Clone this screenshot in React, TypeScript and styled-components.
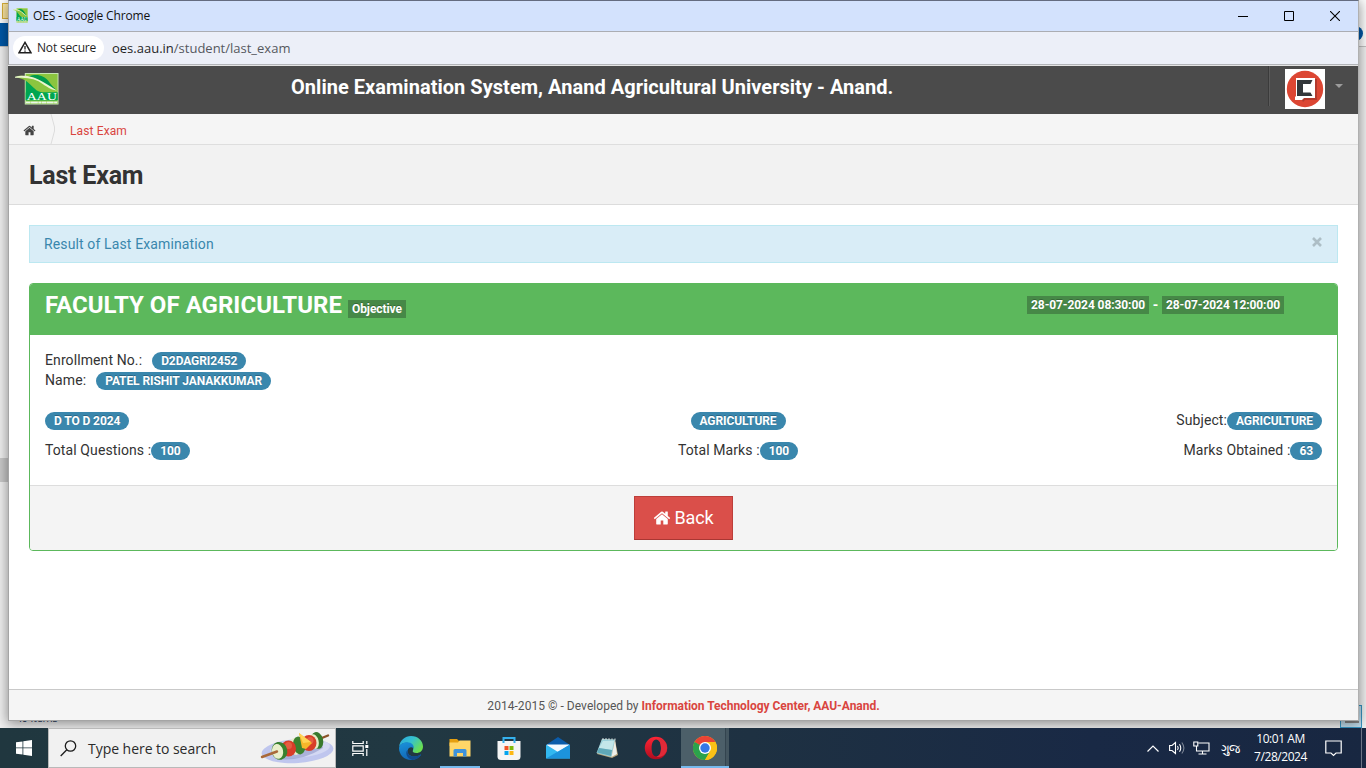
import React from "react";
import styled, { createGlobalStyle, css } from "styled-components";

const GlobalStyle = createGlobalStyle`
  * { box-sizing: border-box; }
  html, body { margin: 0; padding: 0; overflow: hidden; background: #f0f0f0; }
  svg { display: block; flex-shrink: 0; }
`;

const uiFont = css`font-family: "Open Sans", "Noto Sans", sans-serif;`;
const pageFont = css`font-family: Roboto, "Liberation Sans", sans-serif;`;

const Screen = styled.div`
  width: 1366px;
  height: 768px;
  display: flex;
  flex-direction: column;
  overflow: hidden;
`;

/* ---------- Desktop with the window lying over an explorer window ---------- */
const Desktop = styled.div`
  position: relative;
  height: 728px;
  overflow: hidden;
  background: #f2f2f2;
`;
const BackWindow = styled.div`
  position: absolute;
  inset: 0;
  display: flex;
  flex-direction: column;
`;
const BackTitle = styled.div`
  height: 23px;
  background: #fff;
  padding: 3px 2px;
`;
const FolderChip = styled.div`
  width: 12px;
  height: 16px;
  background: #ffe9a2;
  border: 1px solid #d9b13b;
`;
const BackRibbon = styled.div`
  height: 24px;
  display: flex;
  align-items: center;
  justify-content: space-between;
  background: linear-gradient(90deg, #0058a8 0 40px, #fff 40px);
  border-bottom: 1px solid #c4c4c4;
`;
const HelpDot = styled.div`
  width: 15px;
  height: 15px;
  margin: -3px 3px 0 auto;
  border-radius: 50%;
  background: #0058a8;
`;
const BackBody = styled.div`
  flex: 1;
  padding-top: 411px;
`;
const ScrollPiece = styled.div`
  width: 10px;
  height: 24px;
  background: #cbcbcb;
`;
const BackStatus = styled.div`
  height: 23px;
  display: flex;
  justify-content: space-between;
  padding: 0 4px 0 16px;
  ${uiFont}
  font-size: 11px;
  line-height: 26px;
  letter-spacing: -0.3px;
  color: #1e3a5c;
`;
const ViewButton = styled.div`
  width: 22px;
  height: 23px;
  padding: 6px 2px 0 4px;
  background: #c3dfee;
  border: 1px solid #3797c6;
`;
const ViewGlyph = styled.div`
  height: 11px;
  border: 1px solid #878787;
  border-bottom-width: 2px;
`;

const Win = styled.div`
  position: absolute;
  left: 8px;
  top: 0;
  width: 1351px;
  height: 721px;
  display: flex;
  flex-direction: column;
  border: 1px solid #a5a5a5;
  border-top-color: #646c80;
  border-right-color: #b0b0b0;
  background: #fff;
  box-shadow: 0 2px 12px 1px rgba(0, 0, 0, 0.42);
`;
const TitleBar = styled.div`
  height: 31px;
  display: flex;
  align-items: center;
  padding-left: 4px;
  background: #d3e2fd;
  border-bottom: 1px solid #abadb3;
  ${uiFont}
  font-size: 12px;
  letter-spacing: -0.165px;
  color: #111;
`;
const TitleLogo = styled.div`
  margin-top: -2px;
`;
const TitleText = styled.span`
  margin: -2px 0 0 5px;
`;
const WinControls = styled.div`
  margin-left: auto;
  display: flex;
  height: 30px;
`;
const WinControl = styled.div`
  width: 46px;
  display: flex;
  align-items: center;
  justify-content: center;
`;
const AddressBar = styled.div`
  height: 33px;
  display: flex;
  align-items: center;
  padding-left: 4px;
  background: #eceff8;
  border-bottom: 1px solid #b2b4b8;
  ${uiFont}
`;
const SecurityChip = styled.div`
  height: 24px;
  width: 91px;
  display: flex;
  align-items: center;
  gap: 5px;
  padding: 0 0 1px 5px;
  border-radius: 12px;
  background: #fff;
  font-size: 12px;
  font-weight: 500;
  letter-spacing: -0.17px;
  color: #1f1f1f;
`;
const Url = styled.div`
  margin-left: 8px;
  font-size: 13px;
  color: #1f1f1f;
`;
const UrlPath = styled.span`
  color: #55585e;
`;

/* ---------- Web page ---------- */
const Page = styled.div`
  flex: 1;
  display: flex;
  flex-direction: column;
  ${pageFont}
  font-size: 14px;
  line-height: 20px;
  letter-spacing: 0.1px;
  color: #333;
  background: #fff;
`;
const Header = styled.header`
  height: 49px;
  display: flex;
  margin-left: -1px;
  background: #4b4b4b;
  border-top: 1px solid #e4e4e4;
`;
const LogoBox = styled.div`
  width: 283px;
  padding: 7px 0 0 7px;
`;
const HeaderTitle = styled.div`
  padding-top: 11px;
  font-size: 20px;
  font-weight: 700;
  letter-spacing: 0.032px;
  color: #fff;
`;
const UserMenu = styled.div`
  margin-left: auto;
  width: 90px;
  height: 40px;
  display: flex;
  padding: 3px 0 0 16px;
  border-left: 1px solid #3b3b3b;
  box-shadow: inset 1px 0 0 #5b5b5b;
`;
const Avatar = styled.div`
  width: 40px;
  height: 40px;
  background: #fff;
`;
const Caret = styled.div`
  width: 8px;
  height: 4px;
  margin: 15px 0 0 10px;
  border: 4px solid transparent;
  border-top-color: #9c9c9c;
  border-bottom: 0;
`;
const Breadcrumb = styled.nav`
  height: 31px;
  display: flex;
  align-items: center;
  background: #f5f5f5;
  border-bottom: 1px solid #dedede;
  font-size: 12px;
  letter-spacing: 0.12px;
  color: #d9453f;
`;
const CrumbHome = styled.div`
  display: flex;
  width: 41px;
  padding: 2px 0 0 14px;
  color: #444;
`;
const CrumbText = styled.span`
  margin: 3px 0 0 14px;
`;
const PageHeading = styled.h1`
  height: 60px;
  margin: 0;
  padding-left: 20px;
  background: #f2f2f2;
  border-bottom: 1px solid #dcdcdc;
  font-size: 25px;
  line-height: 61px;
  font-weight: 700;
  letter-spacing: -0.22px;
`;
const Content = styled.main`
  flex: 1;
  padding: 20px 20px 0;
`;
const Alert = styled.div`
  height: 38px;
  display: flex;
  justify-content: space-between;
  padding: 8px 15px 8px 14px;
  margin-bottom: 20px;
  background: #d9edf7;
  border: 1px solid #bce8f1;
  letter-spacing: 0.13px;
  color: #3a87ad;
`;
const AlertClose = styled.span`
  padding-top: 3px;
`;
const Panel = styled.section`
  height: 268px;
  display: flex;
  flex-direction: column;
  overflow: hidden;
  border: 1px solid #5cb85c;
  border-radius: 4px;
`;
const PanelHeader = styled.div`
  height: 51px;
  display: flex;
  justify-content: space-between;
  padding: 0 53px 0 15px;
  background: #5cb85c;
  color: #fff;
`;
const PanelTitle = styled.div`
  display: flex;
  gap: 6px;
  font-size: 24px;
  line-height: 42px;
  font-weight: 700;
  letter-spacing: 0.027px;
`;
const Tag = styled.span<{ $top: number }>`
  height: 18px;
  padding: 0 4px;
  margin-top: ${(p) => p.$top}px;
  background: #468847;
  color: #fff;
  font-size: 12px;
  line-height: 18px;
  font-weight: 700;
  letter-spacing: -0.085px;
  text-shadow: 0 -1px 0 rgba(0, 0, 0, 0.25);
`;
const Period = styled.div`
  display: flex;
  font-weight: 700;
  line-height: 42px;
`;
const Dash = styled.span`
  width: 13px;
  text-align: center;
`;
const PanelBody = styled.div`
  height: 150px;
  padding: 15px;
`;
const Line = styled.div`
  display: flex;
  height: 20px;
`;
const Cells = styled.div<{ $gap: number }>`
  display: grid;
  grid-template-columns: 524px 338px 1fr;
  height: 20px;
  margin-top: ${(p) => p.$gap}px;
`;
const Cell = styled.div<{ $align?: string }>`
  display: flex;
  justify-content: ${(p) => p.$align || "flex-start"};
`;
const Badge = styled.span<{ $offset?: number }>`
  height: 18px;
  padding: 0 9px;
  margin: 2px 0 0 ${(p) => p.$offset || 0}px;
  border-radius: 9px;
  background: #3a87ad;
  color: #fff;
  font-size: 12px;
  line-height: 18px;
  font-weight: 700;
  letter-spacing: -0.095px;
  text-shadow: 0 -1px 0 rgba(0, 0, 0, 0.25);
`;
const PanelFooter = styled.div`
  flex: 1;
  display: flex;
  align-items: center;
  justify-content: center;
  background: #f4f4f4;
  border-top: 1px solid #ddd;
`;
const BackButton = styled.button`
  width: 99px;
  height: 44px;
  margin: 0;
  padding: 0 0 1px;
  display: flex;
  align-items: center;
  justify-content: center;
  gap: 3px;
  background: #da4f4a;
  border: 1px solid #bd3e3a;
  border-bottom-color: #a93733;
  color: #fff;
  ${pageFont}
  font-size: 18px;
  letter-spacing: -0.1px;
`;
const Footer = styled.footer`
  height: 31px;
  display: flex;
  justify-content: center;
  padding-top: 6px;
  background: #f5f5f5;
  border-top: 1px solid #c9c9c9;
  font-size: 12px;
  letter-spacing: 0.04px;
  white-space: pre;
  color: #555;
`;
const FooterLink = styled.span`
  font-weight: 700;
  letter-spacing: -0.03px;
  color: #d9453f;
`;

/* ---------- Taskbar ---------- */
const Taskbar = styled.div`
  height: 40px;
  display: flex;
  background: linear-gradient(90deg, #20373f 0, #213842 30%, #1e3142 55%, #192945 80%, #182741 100%);
  ${uiFont}
`;
const StartButton = styled.div`
  width: 48px;
  padding: 12px 0 0 16px;
`;
const SearchBox = styled.div`
  width: 288px;
  display: flex;
  align-items: center;
  padding-left: 11px;
  background: #f1f1f1;
  border: 1px solid #b9b9b9;
  font-size: 14px;
  letter-spacing: -0.04px;
  color: #2b2b2b;
`;
const SearchText = styled.span`
  flex: 1;
  margin-left: 11px;
`;
const TaskSlot = styled.div<{ $active?: boolean; $open?: boolean }>`
  width: 49px;
  display: flex;
  align-items: center;
  justify-content: center;
  ${(p) => p.$open && css`
    background: linear-gradient(#76b9ed, #76b9ed) 50% 100% / 40px 2px no-repeat;
  `}
  ${(p) => p.$active && css`
    width: 48px;
    margin-left: 1px;
    padding-top: 2px;
    background: linear-gradient(90deg, #4c5f69 0 44px, #33444f 44px 45px, #43555f 45px);
    border-bottom: 2px solid #76b9ed;
  `}
`;
const TaskIcons = styled.div`
  display: flex;
`;
const TaskView = styled.div`
  width: 50px;
  display: flex;
  align-items: center;
  padding-left: 16px;
`;
const Tray = styled.div`
  margin-left: auto;
  display: flex;
  align-items: center;
  color: #fff;
`;
const TrayItem = styled.div<{ $width: number }>`
  width: ${(p) => p.$width}px;
  display: flex;
  justify-content: center;
`;
const Language = styled.div`
  width: 33px;
  display: flex;
  justify-content: center;
  font-family: "Noto Sans", sans-serif;
  font-size: 12px;
  letter-spacing: -0.7px;
`;
const Clock = styled.div`
  width: 67px;
  font-size: 12px;
  line-height: 18px;
  letter-spacing: -0.45px;
  text-align: center;
`;
const ShowDesktop = styled.div`
  align-self: stretch;
  width: 5px;
  border-left: 1px solid #6a7485;
`;

/* ---------- Icons ---------- */
const HomeIcon = ({ size }: { size: number }) => (
  <svg width={size} height={size} viewBox="0 0 1792 1792" fill="currentColor">
    <path d="M1472 992v480q0 26-19 45t-45 19h-384v-384h-256v384h-384q-26 0-45-19t-19-45v-480q0-1 .5-3t.5-3l575-474 575 474q1 2 1 6zm223-69l-62 74q-8 9-21 11h-3q-13 0-21-7l-692-577-692 577q-12 8-24 7-13-2-21-11l-62-74q-8-10-7-23.500t11-21.500l719-599q32-26 76-26t76 26l244 204v-195q0-14 9-23t23-9h192q14 0 23 9t9 23v408l219 182q10 8 11 21.500t-7 23.500z" />
  </svg>
);

const Logo = ({ width, height }: { width: number; height: number }) => (
  <svg width={width} height={height} viewBox="0 0 45 33" preserveAspectRatio="none">
    <rect x="10" y="0" width="34.500" height="32.500" fill="#c9e6b8" />
    <rect x="11" y="1" width="32.500" height="31" fill="#8bc53f" />
    <path d="M11 6C17 9 18 19 28 20H43.500V28H11Z" fill="#00a651" />
    <path d="M0 4.500C3 2 8 2.500 12 4C18 0 27-.5 33 5C38 10 39 15 44 18.500C36 21 25 20 19 15C14 11 12 6 0 4.500Z" fill="#8bc53f" />
    <path d="M14 3.500C23 0 30 3 34 8C37 12 39 15 42 17C33 15 26 5 14 3.500Z" fill="#009b4c" />
    <path d="M0 3.800C8 2.200 12 3 17 4.200C24 5.500 34 12.500 43 18.300C35 17 29 11.500 24 8.500C17 5 10 4.800 0 4.800Z" fill="#e9f6cf" />
    <path d="M11 20H43.500V28H11Z" fill="#00a651" />
    <text x="12" y="28" textLength="31" lengthAdjust="spacingAndGlyphs" fontFamily="Liberation Serif, serif" fontSize="11.500" fill="#fff">AAU</text>
    <path d="M11 30.500H43.500" stroke="#e8f6e8" strokeWidth="2" strokeDasharray="5 .4 7 .4 3 .4" />
  </svg>
);

const AvatarIcon = () => (
  <svg width="40" height="40" viewBox="0 0 40 40">
    <circle cx="20" cy="20" r="18.200" fill="#dc4633" />
    <path d="M11 10H32V31H20L18 33L17 31H11Z" fill="#8e3026" opacity=".55" />
    <path d="M11 9H30V29H19L17 31H10V28L11 27Z" fill="#fff" />
    <path d="M12 11H27.500L25.500 15H18V23.500H25.500L27.500 27H12Z" fill="#33373a" />
  </svg>
);

const WarnIcon = () => (
  <svg width="14" height="13" viewBox="0 0 14 13" fill="none" stroke="#1f1f1f" strokeWidth="1.500">
    <path d="M7 1.400L13 11.800H1Z" />
    <path d="M7 5V8.400M7 9.400V10.700" strokeWidth="1.300" />
  </svg>
);

const CloseGlyph = () => (
  <svg width="10" height="10" viewBox="0 0 10 10" stroke="#adbec6" strokeWidth="2.600">
    <path d="M1 1L9 9M9 1L1 9" />
  </svg>
);

const Kebab = () => (
  <svg width="75" height="36" viewBox="1 -1 75 36">
    <ellipse cx="38.500" cy="20" rx="36" ry="12" transform="rotate(-4 38 20)" fill="#bfc6ee" />
    <ellipse cx="41" cy="17.500" rx="30" ry="9" transform="rotate(-5 40 17)" fill="#d3d8f3" />
    <path d="M18 28Q42 31 64 17L62 11L22 21Z" fill="#9aa3cf" opacity=".7" />
    <path d="M58 9L69 4.500" stroke="#8a5227" strokeWidth="2.400" strokeLinecap="round" />
    <ellipse cx="58" cy="9.500" rx="6" ry="8.500" transform="rotate(-15 58 9)" fill="#38792e" />
    <ellipse cx="55" cy="10.500" rx="4.500" ry="7.500" transform="rotate(-15 55 10)" fill="#e4ebc4" />
    <ellipse cx="50" cy="12" rx="7.500" ry="8" fill="#d73d28" />
    <ellipse cx="51" cy="9.500" rx="3.500" ry="3.500" fill="#ed6f52" opacity=".6" />
    <ellipse cx="36" cy="15.500" rx="5.500" ry="8.500" transform="rotate(-12 36 15)" fill="#e7edcb" />
    <ellipse cx="40" cy="14.500" rx="6" ry="9" transform="rotate(-12 40 14)" fill="#3c822f" />
    <path d="M40 2L53 12L47 18L43 17Z" fill="#f6b72a" />
    <path d="M40 2L52 11L44 12Z" fill="#ffd455" />
    <ellipse cx="29.500" cy="17.500" rx="7.500" ry="8" fill="#d93d29" />
    <ellipse cx="29.500" cy="14.500" rx="3.500" ry="3.500" fill="#ee7154" opacity=".6" />
    <ellipse cx="20.500" cy="20" rx="7.800" ry="9" transform="rotate(-12 20 20)" fill="#39812f" />
    <ellipse cx="18.500" cy="20.500" rx="5.500" ry="7.500" transform="rotate(-12 18 20)" fill="#e9efcb" />
    <path d="M3 26L18 20.500" stroke="#a9693a" strokeWidth="2.400" strokeLinecap="round" />
  </svg>
);

const EdgeIcon = () => (
  <svg width="24" height="24" viewBox="0 0 24 24">
    <defs>
      <linearGradient id="edgeTop" x1="0" y1="0" x2="1" y2=".6">
        <stop offset="0" stopColor="#2aa5dc" /><stop offset=".5" stopColor="#35c1d0" /><stop offset="1" stopColor="#6be04d" />
      </linearGradient>
      <linearGradient id="edgeBody" x1="0" y1="0" x2=".4" y2="1">
        <stop offset="0" stopColor="#1a93dc" /><stop offset="1" stopColor="#1266b4" />
      </linearGradient>
    </defs>
    <path d="M0 11C1 4 6 0 12 0C19 0 24 5 24 10.500C24 15 20.500 17 17.500 17C14.500 17 13.300 16 13.800 14.800C15 12.500 14.500 7.500 8.500 6.800C4 6.500 1 8.500 0 11Z" fill="url(#edgeTop)" />
    <path d="M0 12C.5 8.500 4 6.300 8 6.300C13 6.300 15.500 9.500 14.500 12.500C13 10.500 9.500 11 8.800 14C7.500 20 15 22 20 19.500C21.500 18.800 22.500 18.200 22 19C19.500 22.500 16 24 12 24C5 24 0 18.500 0 12Z" fill="url(#edgeBody)" />
    <path d="M8.700 14C7.500 20 14.500 22 20 19.500C21.500 18.800 22.500 18.200 22 19C20 22 17 23.600 13.500 24C8 23 5.500 16 8.700 14Z" fill="#114a8b" />
  </svg>
);

const ExplorerIcon = () => (
  <svg width="24" height="24" viewBox="0 0 24 24">
    <path d="M1.500 3H9L11 5H22V10H1.500Z" fill="#e59f10" />
    <path d="M1.500 6.500H10L11.500 4.500H22.500V20.500H1.500Z" fill="#ffd668" />
    <path d="M5.500 20.500V14.500Q5.500 13 7 13H17Q18.500 13 18.500 14.500V20.500H15V17H9V20.500Z" fill="#3e93dc" />
  </svg>
);

const StoreIcon = () => (
  <svg width="24" height="24" viewBox="0 0 24 24">
    <path d="M.5 5H23.500V20.500Q23.500 24 20 24H4Q.5 24 .5 20.500Z" fill="#f5f5f5" />
    <path d="M6.500 7V2H17.500V7" fill="none" stroke="#35b1ee" strokeWidth="2" />
    <path d="M7.500 10H11.500V14H7.500Z" fill="#f05325" /><path d="M12.500 10H16.500V14H12.500Z" fill="#80bb0a" />
    <path d="M7.500 15H11.500V19H7.500Z" fill="#05a5ef" /><path d="M12.500 15H16.500V19H12.500Z" fill="#fdb813" />
  </svg>
);

const MailIcon = () => (
  <svg width="24" height="24" viewBox="0 0 24 24">
    <path d="M0 9L12 1L24 9V12H0Z" fill="#0b5cab" />
    <path d="M1 8.500H23V17H1Z" fill="#f3f9ff" />
    <path d="M0 8.500L12 16L24 8.500V22.500H0Z" fill="#32b8f0" />
    <path d="M0 22.500L24 8.500V22.500Z" fill="#1c93dc" />
  </svg>
);

const NotepadIcon = () => (
  <svg width="24" height="24" viewBox="0 0 24 24">
    <path d="M7 3L20 4L23 19L17 22L2 18Z" fill="#b7a379" />
    <path d="M7 3L20 3.500L16.500 21L1.500 17Z" fill="#9bd0da" />
    <path d="M8 5L19 5L17 14L4 12Z" fill="#c3e6e9" />
    <path d="M4 12L17 14L16 20L2 16.500Z" fill="#5fa8b8" />
    <path d="M20 4L22 18L16.500 21Z" fill="#eef0eb" />
    <path d="M8 2V4M11 2V4M14 2.200V4.200M17 2.400V4.400M20 2.500V4.500" stroke="#d9dddc" />
  </svg>
);

const OperaIcon = () => (
  <svg width="24" height="24" viewBox="0 0 24 24">
    <defs><linearGradient id="opera" x1="0" y1="0" x2="0" y2="1"><stop offset="0" stopColor="#ff2535" /><stop offset="1" stopColor="#b00d1f" /></linearGradient></defs>
    <path fillRule="evenodd" d="M12 .8A11.200 11.200 0 1 0 12 23.200A11.200 11.200 0 1 0 12 .8ZM12.300 3.500C15.500 3.500 17 7.500 17 12S15.500 20.500 12.300 20.500S7.600 16.500 7.600 12S9.100 3.500 12.300 3.500Z" fill="url(#opera)" />
    <path d="M12.300 3.500C15 2 18 3 20 5Q23.200 8 23.200 12T20 19Q16 22 12.300 20.500C15.500 20.500 17 16.500 17 12S15.500 3.500 12.300 3.500Z" fill="#e02a38" />
  </svg>
);

const ChromeIcon = () => (
  <svg width="24" height="24" viewBox="0 0 24 24">
    <circle cx="12" cy="12" r="12" fill="#fbc116" />
    <path d="M12 12L1.600 6A12 12 0 0 0 12 24L17.200 15Z" fill="#2ba24c" />
    <path d="M12 12L1.600 6A12 12 0 0 1 22.400 6H12Z" fill="#ea4335" />
    <path d="M1.600 6L6.800 15L12 12Z" fill="#2ba24c" />
    <path d="M12 6H22.400A12 12 0 0 1 12 24L17.200 15Z" fill="#fbc116" />
    <circle cx="12" cy="12" r="6" fill="#fff" />
    <circle cx="12" cy="12" r="4.700" fill="#3478e5" />
  </svg>
);

const App = () => (
  <Screen>
    <GlobalStyle />
    <Desktop>
      <BackWindow>
        <BackTitle><FolderChip /></BackTitle>
        <BackRibbon><HelpDot /></BackRibbon>
        <BackBody><ScrollPiece /></BackBody>
        <BackStatus>
          <span>49 items</span>
          <ViewButton><ViewGlyph /></ViewButton>
        </BackStatus>
      </BackWindow>
      <Win>
        <TitleBar>
          <TitleLogo><Logo width={15} height={15} /></TitleLogo>
          <TitleText>OES - Google Chrome</TitleText>
          <WinControls>
            <WinControl><svg width="10" height="10"><path d="M0 5.500H10" stroke="#000" /></svg></WinControl>
            <WinControl><svg width="10" height="10"><path d="M.5.5H9.500V9.500H.5Z" fill="none" stroke="#000" /></svg></WinControl>
            <WinControl><svg width="10" height="10"><path d="M0 0L10 10M10 0L0 10" stroke="#000" strokeWidth="1.100" /></svg></WinControl>
          </WinControls>
        </TitleBar>
        <AddressBar>
          <SecurityChip><WarnIcon />Not secure</SecurityChip>
          <Url>oes.aau.in<UrlPath>/student/last_exam</UrlPath></Url>
        </AddressBar>
        <Page>
          <Header>
            <LogoBox><Logo width={44} height={32} /></LogoBox>
            <HeaderTitle>Online Examination System, Anand Agricultural University - Anand.</HeaderTitle>
            <UserMenu><Avatar><AvatarIcon /></Avatar><Caret /></UserMenu>
          </Header>
          <Breadcrumb>
            <CrumbHome><HomeIcon size={13} /></CrumbHome>
            <svg width="6" height="30" fill="none" stroke="#dcdcdc"><path d="M1 0L4.500 13V17L1 30" /></svg>
            <CrumbText>Last Exam</CrumbText>
          </Breadcrumb>
          <PageHeading>Last Exam</PageHeading>
          <Content>
            <Alert>
              <span>Result of Last Examination</span>
              <AlertClose><CloseGlyph /></AlertClose>
            </Alert>
            <Panel>
              <PanelHeader>
                <PanelTitle>FACULTY OF AGRICULTURE<Tag $top={16}>Objective</Tag></PanelTitle>
                <Period>
                  <Tag $top={12}>28-07-2024 08:30:00</Tag>
                  <Dash>-</Dash>
                  <Tag $top={12}>28-07-2024 12:00:00</Tag>
                </Period>
              </PanelHeader>
              <PanelBody>
                <Line>Enrollment No.:<Badge $offset={10}>D2DAGRI2452</Badge></Line>
                <Line>Name:<Badge $offset={10}>PATEL RISHIT JANAKKUMAR</Badge></Line>
                <Cells $gap={20}>
                  <Cell><Badge>D TO D 2024</Badge></Cell>
                  <Cell $align="center"><Badge>AGRICULTURE</Badge></Cell>
                  <Cell $align="flex-end">Subject:<Badge>AGRICULTURE</Badge></Cell>
                </Cells>
                <Cells $gap={10}>
                  <Cell>Total Questions :<Badge>100</Badge></Cell>
                  <Cell $align="center">Total Marks :<Badge>100</Badge></Cell>
                  <Cell $align="flex-end">Marks Obtained :<Badge>63</Badge></Cell>
                </Cells>
              </PanelBody>
              <PanelFooter>
                <BackButton><HomeIcon size={18} />Back</BackButton>
              </PanelFooter>
            </Panel>
          </Content>
          <Footer>2014-2015 © - Developed by <FooterLink>Information Technology Center, AAU-Anand.</FooterLink></Footer>
        </Page>
      </Win>
    </Desktop>
    <Taskbar>
      <StartButton>
        <svg width="16" height="16" fill="#fff"><path d="M0 2.300L6.500 1.400V7.500H0ZM7.300 1.300L16 0V7.500H7.300ZM0 8.300H6.500V14.600L0 13.700ZM7.300 8.300H16V16L7.300 14.700Z" /></svg>
      </StartButton>
      <SearchBox>
        <svg width="17" height="17" fill="none" stroke="#1c1c1c" strokeWidth="1.300"><circle cx="10.500" cy="6" r="5.200" /><path d="M6.800 9.800L.7 16" /></svg>
        <SearchText>Type here to search</SearchText>
        <Kebab />
      </SearchBox>
      <TaskIcons>
        <TaskView>
          <svg width="17" height="17" fill="none" stroke="#fff" strokeWidth="1.200"><path d="M.8 1V3.500H11.200V1M.8 5.800H11.200V11.200H.8ZM.8 16V13.500H11.200V16M14.800 1V4M14.800 9V16" /><path d="M13.300 5H16.300V8H13.300Z" fill="#fff" stroke="none" /></svg>
        </TaskView>
        <TaskSlot><EdgeIcon /></TaskSlot>
        <TaskSlot $open><ExplorerIcon /></TaskSlot>
        <TaskSlot><StoreIcon /></TaskSlot>
        <TaskSlot><MailIcon /></TaskSlot>
        <TaskSlot><NotepadIcon /></TaskSlot>
        <TaskSlot><OperaIcon /></TaskSlot>
        <TaskSlot $active><ChromeIcon /></TaskSlot>
      </TaskIcons>
      <Tray>
        <TrayItem $width={24}><svg width="12" height="7" fill="none" stroke="#fff" strokeWidth="1.200"><path d="M.5 6.500L6 1L11.500 6.500" /></svg></TrayItem>
        <TrayItem $width={24}><svg width="17" height="14" fill="none" stroke="#fff" strokeWidth="1.100"><path d="M.6 4.500H3L6.500 1.500V12.500L3 9.500H.6ZM8.500 5Q10 7 8.500 9M10.500 3.200Q13 7 10.500 10.800" /><path d="M12.800 1.500Q17 7 12.800 12.500" stroke="#7d8796" /></svg></TrayItem>
        <TrayItem $width={25}><svg width="17" height="14" fill="none" stroke="#fff" strokeWidth="1.100"><path d="M5.500 2H16V10H3.500V5.500M.8 1H4.800V5H.8ZM9.500 10V13M5.500 13H13.500" /></svg></TrayItem>
        <Language>ગુજ</Language>
        <Clock>10:01 AM<br />7/28/2024</Clock>
        <TrayItem $width={38}><svg width="17" height="17" fill="none" stroke="#fff" strokeWidth="1.200"><path d="M.8 1H16.200V13H11L8.500 15.500L6 13H.8Z" /></svg></TrayItem>
        <TrayItem $width={9} />
        <ShowDesktop />
      </Tray>
    </Taskbar>
  </Screen>
);

export default App;
